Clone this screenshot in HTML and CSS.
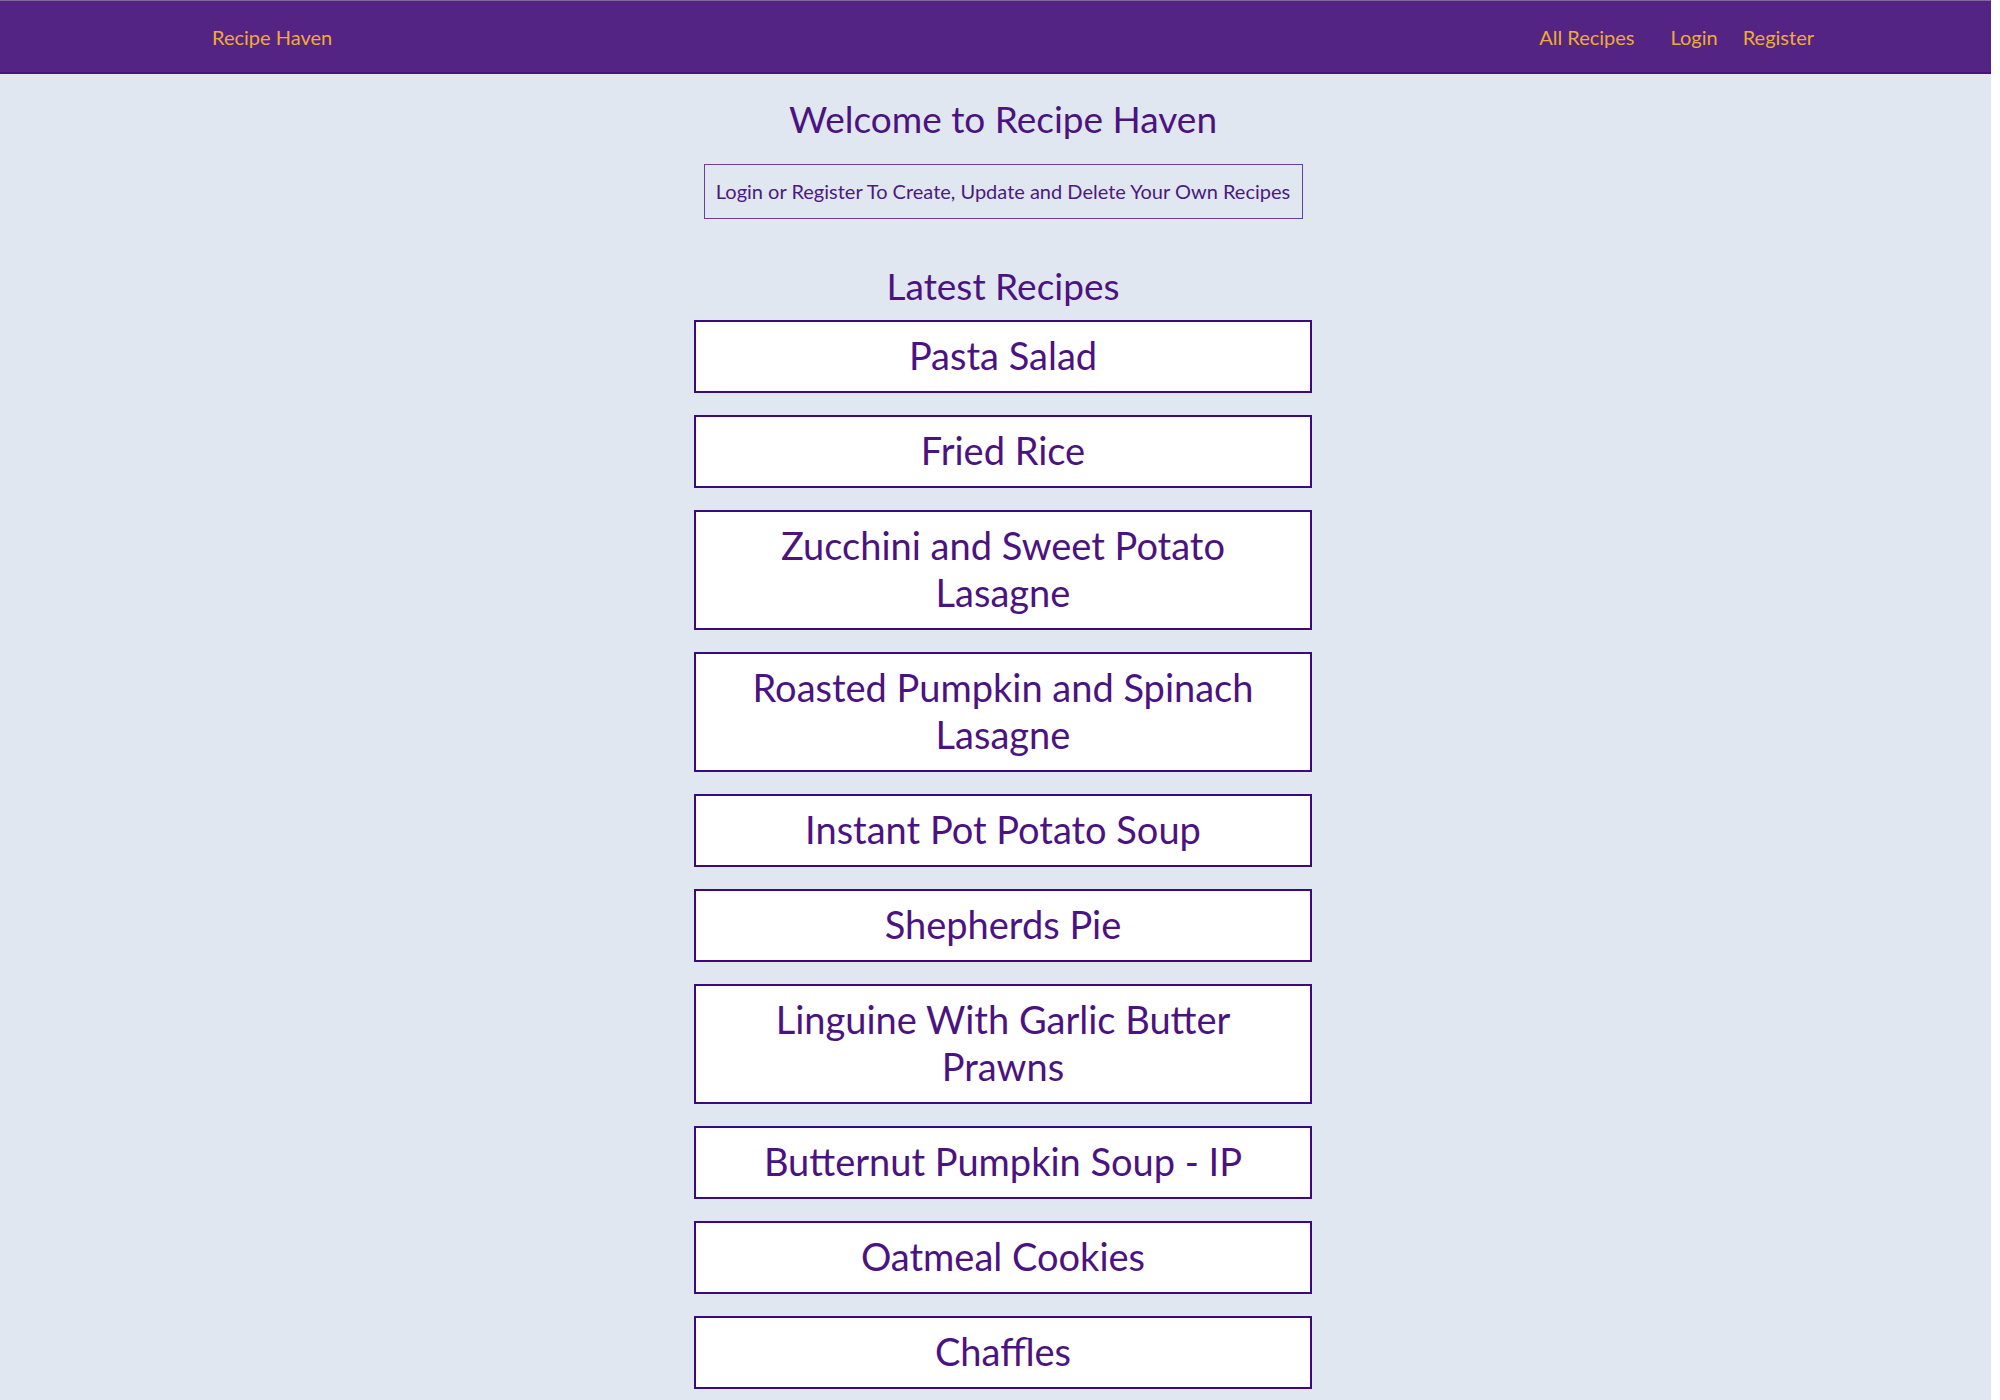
FILE: index.html
```html
<html>
	<head>
		<meta charset="utf-8" />
		<title>Recipe Haven</title>
		<link rel="stylesheet" href="styles.css">
	</head>
	<body>
		<div id="navbar">
			<a class="brand" href="#">Recipe Haven</a>
			<div class="navlinks">
				<a class="navlink" href="#">All Recipes</a>
				<a class="navlink login" href="#">Login</a>
				<a class="navlink register" href="#">Register</a>
			</div>
		</div>

		<div id="mainbody">
			<h1 class="title">Welcome to Recipe Haven</h1>
			<div class="notice">Login or Register To Create, Update and Delete Your Own Recipes</div>

			<h2 class="subtitle">Latest Recipes</h2>
			<div class="recipelist">
				<a class="recipe" href="#">Pasta Salad</a>
				<a class="recipe" href="#">Fried Rice</a>
				<a class="recipe" href="#">Zucchini and Sweet Potato Lasagne</a>
				<a class="recipe" href="#">Roasted Pumpkin and Spinach Lasagne</a>
				<a class="recipe" href="#">Instant Pot Potato Soup</a>
				<a class="recipe" href="#">Shepherds Pie</a>
				<a class="recipe" href="#">Linguine With Garlic Butter Prawns</a>
				<a class="recipe" href="#">Butternut Pumpkin Soup - IP</a>
				<a class="recipe" href="#">Oatmeal Cookies</a>
				<a class="recipe" href="#">Chaffles</a>
			</div>
		</div>
	</body>
</html>
```

FILE: styles.css
```css
html {
	background-color: white;
}
body {
	margin: 0 9px 0 0;
	min-height: 100vh;
	background-color: #e1e7f0;
	font-family: Lato, "Open Sans", sans-serif;
	color: #4b1382;
}
a {
	text-decoration: none;
}
#navbar {
	display: flex;
	align-items: center;
	justify-content: space-between;
	height: 71px;
	padding: 0 177px 0 212px;
	background-color: #532483;
	border-top: 1px solid #7d6a98;
	border-bottom: 2px solid #4c0e82;
	font-size: 20px;
	line-height: 24px;
}
#navbar a {
	color: #f0a93a;
}
.navlinks {
	display: flex;
}
.login {
	margin-left: 36px;
}
.register {
	margin-left: 25px;
}
#mainbody {
	display: flex;
	flex-direction: column;
	align-items: center;
	padding-left: 15px;
	padding-bottom: 40px;
}
.title {
	margin: 23px 0 0 0;
	font-size: 37px;
	line-height: 44px;
	font-weight: normal;
}
.notice {
	box-sizing: border-box;
	width: 599px;
	margin-top: 23px;
	padding: 14px 8px 15px 8px;
	border: 1px solid #6b3fa0;
	font-size: 20px;
	line-height: 24px;
	text-align: center;
	color: #4a1a80;
}
.subtitle {
	margin: 45px 0 12px 0;
	font-size: 37px;
	line-height: 44px;
	font-weight: normal;
}
.recipelist {
	display: flex;
	flex-direction: column;
	gap: 22px;
}
.recipe {
	box-sizing: border-box;
	width: 618px;
	padding: 10px 42px 12px 42px;
	background-color: white;
	border: 2px solid #3c0a7c;
	font-size: 38px;
	line-height: 47px;
	text-align: center;
	color: #4b1382;
}
```
